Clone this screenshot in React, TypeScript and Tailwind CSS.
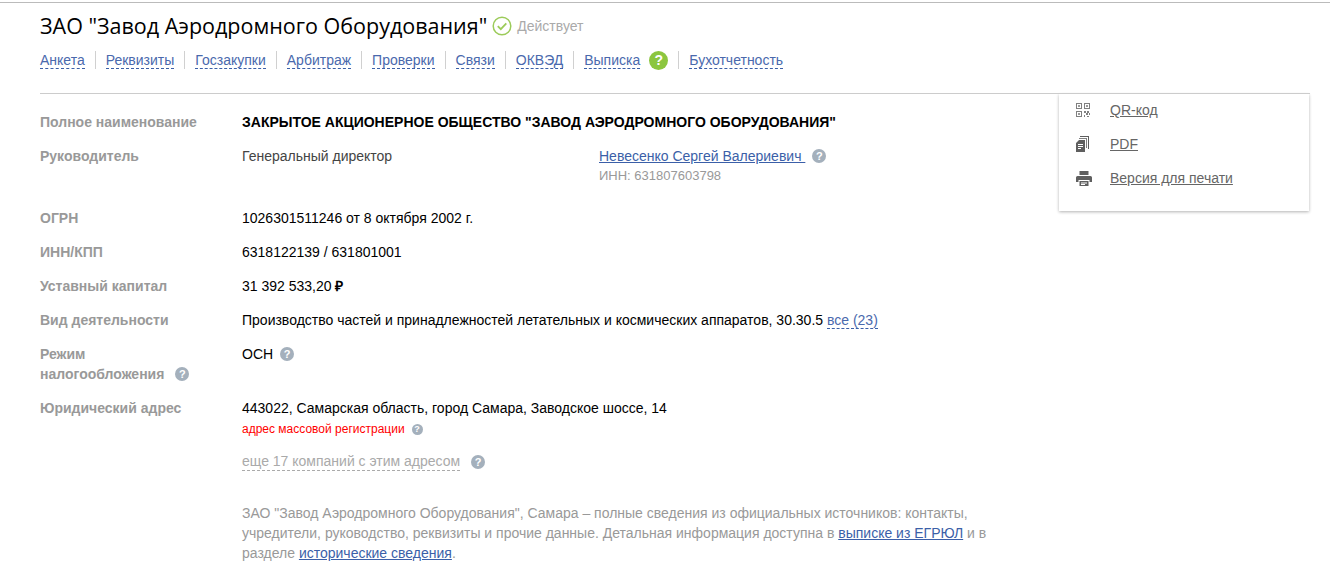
function Hint({ size = 'sm' }: { size?: 'sm' | 'xs' }) {
  return (
    <span
      className={
        size === 'sm'
          ? 'inline-flex h-[14px] w-[14px] items-center justify-center rounded-full bg-[#a4b0bc] text-[11px] leading-none font-bold text-white'
          : 'inline-flex h-[11px] w-[11px] items-center justify-center rounded-full bg-[#a4b0bc] text-[9px] leading-none font-bold text-white'
      }
    >
      ?
    </span>
  );
}

function Row({ label, children }: { label: React.ReactNode; children: React.ReactNode }) {
  return (
    <div className="flex pb-[14px]">
      <div className="w-[202px] shrink-0 font-bold text-[#999999]">{label}</div>
      <div className="min-w-0 flex-1 text-black">{children}</div>
    </div>
  );
}

const tabs = ['Анкета', 'Реквизиты', 'Госзакупки', 'Арбитраж', 'Проверки', 'Связи', 'ОКВЭД', 'Выписка', 'Бухотчетность'];

function Tabs() {
  return (
    <div className="mt-[2px] flex h-[20px] items-center">
      {tabs.map((tab, i) => (
        <div
          key={tab}
          className={
            i === 0
              ? 'flex h-[18px] items-center pr-[10px]'
              : 'flex h-[18px] items-center border-l border-[#d0d0d0] px-[10px]'
          }
        >
          <span className="border-b border-dashed border-[#3b5fa8] leading-[16px] text-[#4a69ad]">{tab}</span>
          {tab === 'Выписка' && (
            <span className="ml-[9px] inline-flex h-[19px] w-[19px] items-center justify-center rounded-full bg-[#8cc63f] text-[14px] leading-none font-bold text-white">
              ?
            </span>
          )}
        </div>
      ))}
    </div>
  );
}

function QrIcon() {
  return (
    <svg width="14" height="14" viewBox="0 0 14 14" fill="#808080">
      <path fillRule="evenodd" d="M0 0h6v6H0zM1 1v4h4V1z" />
      <path d="M2 2h2v2H2z" fill="#999999" />
      <path fillRule="evenodd" d="M8 0h6v6H8zM9 1v4h4V1z" />
      <path d="M10 2h2v2h-2z" fill="#999999" />
      <path fillRule="evenodd" d="M0 8h6v6H0zM1 9v4h4V9z" />
      <path d="M2 10h2v2H2z" fill="#999999" />
      <path d="M8 8h2v2H8zM11 8h2v2h-2zM10 10h2v2h-2zM13 10h1v2h-1zM8 12h1v2H8zM11 13h2v1h-2z" />
    </svg>
  );
}

function PdfIcon() {
  return (
    <svg width="13" height="16" viewBox="0 0 13 16" fill="#5f5f5f">
      <path d="M4 0h9v13h-1V1H4z" />
      <path d="M3 2h8v10h-1V3H3z" fill="#808080" />
      <path fillRule="evenodd" d="M3 4h6v12H0V7zM2 8v1h5V8zM2 10v1h5v-1zM2 12v1h3v-1z" />
    </svg>
  );
}

function PrintIcon() {
  return (
    <svg width="16" height="15" viewBox="0 0 16 15" fill="#5f5f5f">
      <path d="M3.500 0h9v4h-9z" />
      <path d="M1.500 5h13A1.500 1.500 0 0 1 16 6.500V11h-2.500V9h-11v2H0V6.500A1.500 1.500 0 0 1 1.500 5z" />
      <path fillRule="evenodd" d="M3.500 10h9v5h-9zM5 11.500v1h6v-1zM5 13v1h4v-1z" />
    </svg>
  );
}

function SidePanel() {
  const items = [
    { icon: <QrIcon />, text: 'QR-код' },
    { icon: <PdfIcon />, text: 'PDF' },
    { icon: <PrintIcon />, text: 'Версия для печати' },
  ];
  return (
    <div className="absolute top-[94px] left-[1059px] h-[117px] w-[250px] bg-white shadow-[0_1px_3px_rgba(0,0,0,0.3)]">
      <div className="mt-[-1px]">
        {items.map((item) => (
          <div key={item.text} className="flex h-[34px] items-center">
            <div className="flex w-[51px] justify-start pl-[17px]">{item.icon}</div>
            <span className="text-[#666666] underline">{item.text}</span>
          </div>
        ))}
      </div>
    </div>
  );
}

export default function App() {
  return (
    <div className="relative h-[571px] w-[1330px] overflow-hidden bg-white font-['Liberation_Sans',Arial,sans-serif] text-[14px] leading-[20px]">
      <div className="mt-[2px] border-t border-[#bbbbbb] pt-[1px]" />
      <div className="pl-[40px]">
        <div className="flex h-[44px] items-center">
          <h1 className="font-['Open_Sans',sans-serif] text-[21.500px] leading-[44px] font-normal text-black">ЗАО "Завод Аэродромного Оборудования"</h1>
          <svg className="ml-[5px]" width="20" height="20" viewBox="0 0 20 20" fill="none">
            <circle cx="10" cy="10" r="8.800" stroke="#9ccb5a" strokeWidth="1.500" />
            <path d="M5.800 10.200l3 3 5.500-5.800" stroke="#9ccb5a" strokeWidth="1.800" />
          </svg>
          <span className="ml-[5px] text-[#aaaaaa]">Действует</span>
        </div>
        <Tabs />
        <div className="relative z-10 mt-[23px] mr-[20px] border-t border-[#cccccc] pt-[18px]">
          <Row label="Полное наименование">
            <span className="font-bold">ЗАКРЫТОЕ АКЦИОНЕРНОЕ ОБЩЕСТВО "ЗАВОД АЭРОДРОМНОГО ОБОРУДОВАНИЯ"</span>
          </Row>
          <div className="pb-[8px]">
            <Row label="Руководитель">
              <div className="flex">
                <div className="w-[357px] text-[#444444]">Генеральный директор</div>
                <div>
                  <div className="flex items-center">
                    <span className="text-[#3b5fa8] underline">Невесенко Сергей Валериевич&nbsp;</span>
                    <span className="ml-[7px] flex"><Hint /></span>
                  </div>
                  <div className="text-[13px] text-[#999999]">ИНН: 631807603798</div>
                </div>
              </div>
            </Row>
          </div>
          <Row label="ОГРН">1026301511246 от 8 октября 2002 г.</Row>
          <Row label="ИНН/КПП">6318122139 / 631801001</Row>
          <Row label="Уставный капитал">
            31 392 533,20 <span className="font-bold">₽</span>
          </Row>
          <Row label="Вид деятельности">
            Производство частей и принадлежностей летательных и космических аппаратов, 30.30.5{' '}
            <span className="border-b border-dashed border-[#3b5fa8] text-[#4a69ad]">все (23)</span>
          </Row>
          <Row
            label={
              <>
                Режим
                <br />
                <span className="inline-flex items-center">
                  налогообложения
                  <span className="ml-[11px] flex"><Hint /></span>
                </span>
              </>
            }
          >
            <span className="inline-flex items-center">
              ОСН
              <span className="ml-[7px] flex"><Hint /></span>
            </span>
          </Row>
          <div className="flex">
            <div className="w-[202px] shrink-0 font-bold text-[#999999]">Юридический адрес</div>
            <div className="w-[760px]">
              <div className="text-black">443022, Самарская область, город Самара, Заводское шоссе, 14</div>
              <div className="mt-[1px] flex items-center text-[12px] text-[#ff0000]">
                адрес массовой регистрации
                <span className="ml-[7px] flex"><Hint size="xs" /></span>
              </div>
              <div className="mt-[14px] flex items-center">
                <span className="border-b border-dashed border-[#aaaaaa] leading-[17px] text-[#aaaaaa]">
                  еще 17 компаний с этим адресом
                </span>
                <span className="ml-[11px] flex"><Hint /></span>
              </div>
              <p className="mt-[32px] text-[#999999]">
                ЗАО "Завод Аэродромного Оборудования", Самара – полные сведения из официальных источников: контакты,
                учредители, руководство, реквизиты и прочие данные. Детальная информация доступна в{' '}
                <span className="text-[#3b5fa8] underline">выписке из ЕГРЮЛ</span> и в разделе{' '}
                <span className="text-[#3b5fa8] underline">исторические сведения</span>.
              </p>
            </div>
          </div>
        </div>
      </div>
      <SidePanel />
    </div>
  );
}
